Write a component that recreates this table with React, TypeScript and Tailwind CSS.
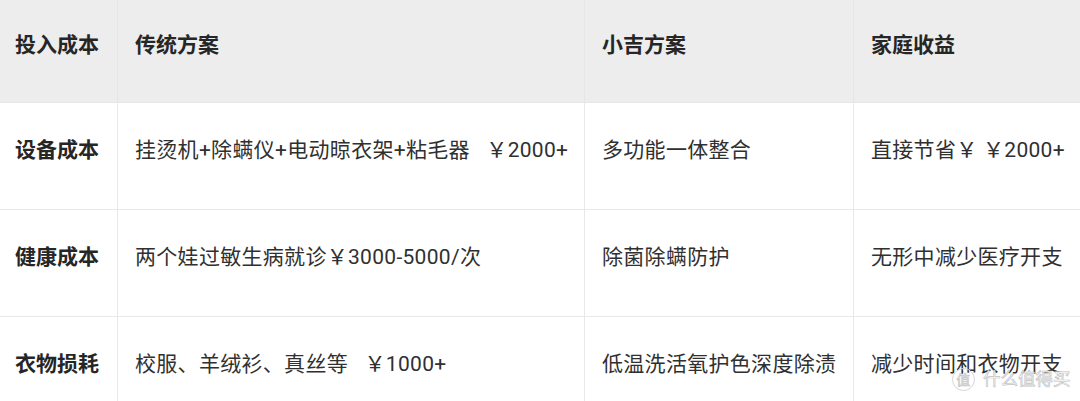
import React from "react";

const rows: { head: string; a: string; b: string; c: string }[] = [
  { head: "设备成本", a: "挂烫机+除螨仪+电动晾衣架+粘毛器   ￥2000+", b: "多功能一体整合", c: "直接节省￥ ￥2000+" },
  { head: "健康成本", a: "两个娃过敏生病就诊￥3000-5000/次", b: "除菌除螨防护", c: "无形中减少医疗开支" },
  { head: "衣物损耗", a: "校服、羊绒衫、真丝等   ￥1000+", b: "低温洗活氧护色深度除渍", c: "减少时间和衣物开支" },
];

export default function App() {
  return (
    <div
      className="relative w-[1080px] h-[401px] overflow-hidden bg-white text-[21px] leading-[28px] tracking-[0.3px] text-[#303030]"
      style={{ fontFamily: 'Roboto, "Noto Sans CJK SC", sans-serif' }}
    >
      <div className="grid grid-cols-[118px_467px_269px_1fr]">
        {["投入成本", "传统方案", "小吉方案", "家庭收益"].map((t, i) => (
          <div
            key={t}
            className={`h-[103px] bg-[#ededed] border-b border-[#e6e6e6] pt-[31px] font-bold tracking-normal text-[#262626] whitespace-pre ${
              i < 3 ? "border-r" : ""
            } ${i === 0 ? "pl-[15px]" : "pl-[17px]"}`}
          >
            {t}
          </div>
        ))}
        {rows.map((r) => (
          <React.Fragment key={r.head}>
            <div className="h-[107px] border-b border-r border-[#e8e8e8] pt-[33px] pl-[15px] font-bold tracking-normal text-[#262626] whitespace-pre">
              {r.head}
            </div>
            <div className="h-[107px] border-b border-r border-[#e8e8e8] pt-[33px] pl-[17px] whitespace-pre">
              {r.a}
            </div>
            <div className="h-[107px] border-b border-r border-[#e8e8e8] pt-[33px] pl-[17px] whitespace-pre">
              {r.b}
            </div>
            <div className="h-[107px] border-b border-[#e8e8e8] pt-[33px] pl-[17px] whitespace-pre">
              {r.c}
            </div>
          </React.Fragment>
        ))}
      </div>
      <div className="absolute left-[952px] top-[368px] flex items-center gap-[8px] pointer-events-none">
        <div className="w-[23px] h-[23px] rounded-full border border-[#d6d6d6] flex items-center justify-center text-[14px] leading-none text-white [-webkit-text-stroke:0.7px_#c4c4c4]">
          值
        </div>
        <div className="text-[17.5px] leading-none tracking-normal text-white [-webkit-text-stroke:0.7px_#c4c4c4]">
          什么值得买
        </div>
      </div>
    </div>
  );
}
